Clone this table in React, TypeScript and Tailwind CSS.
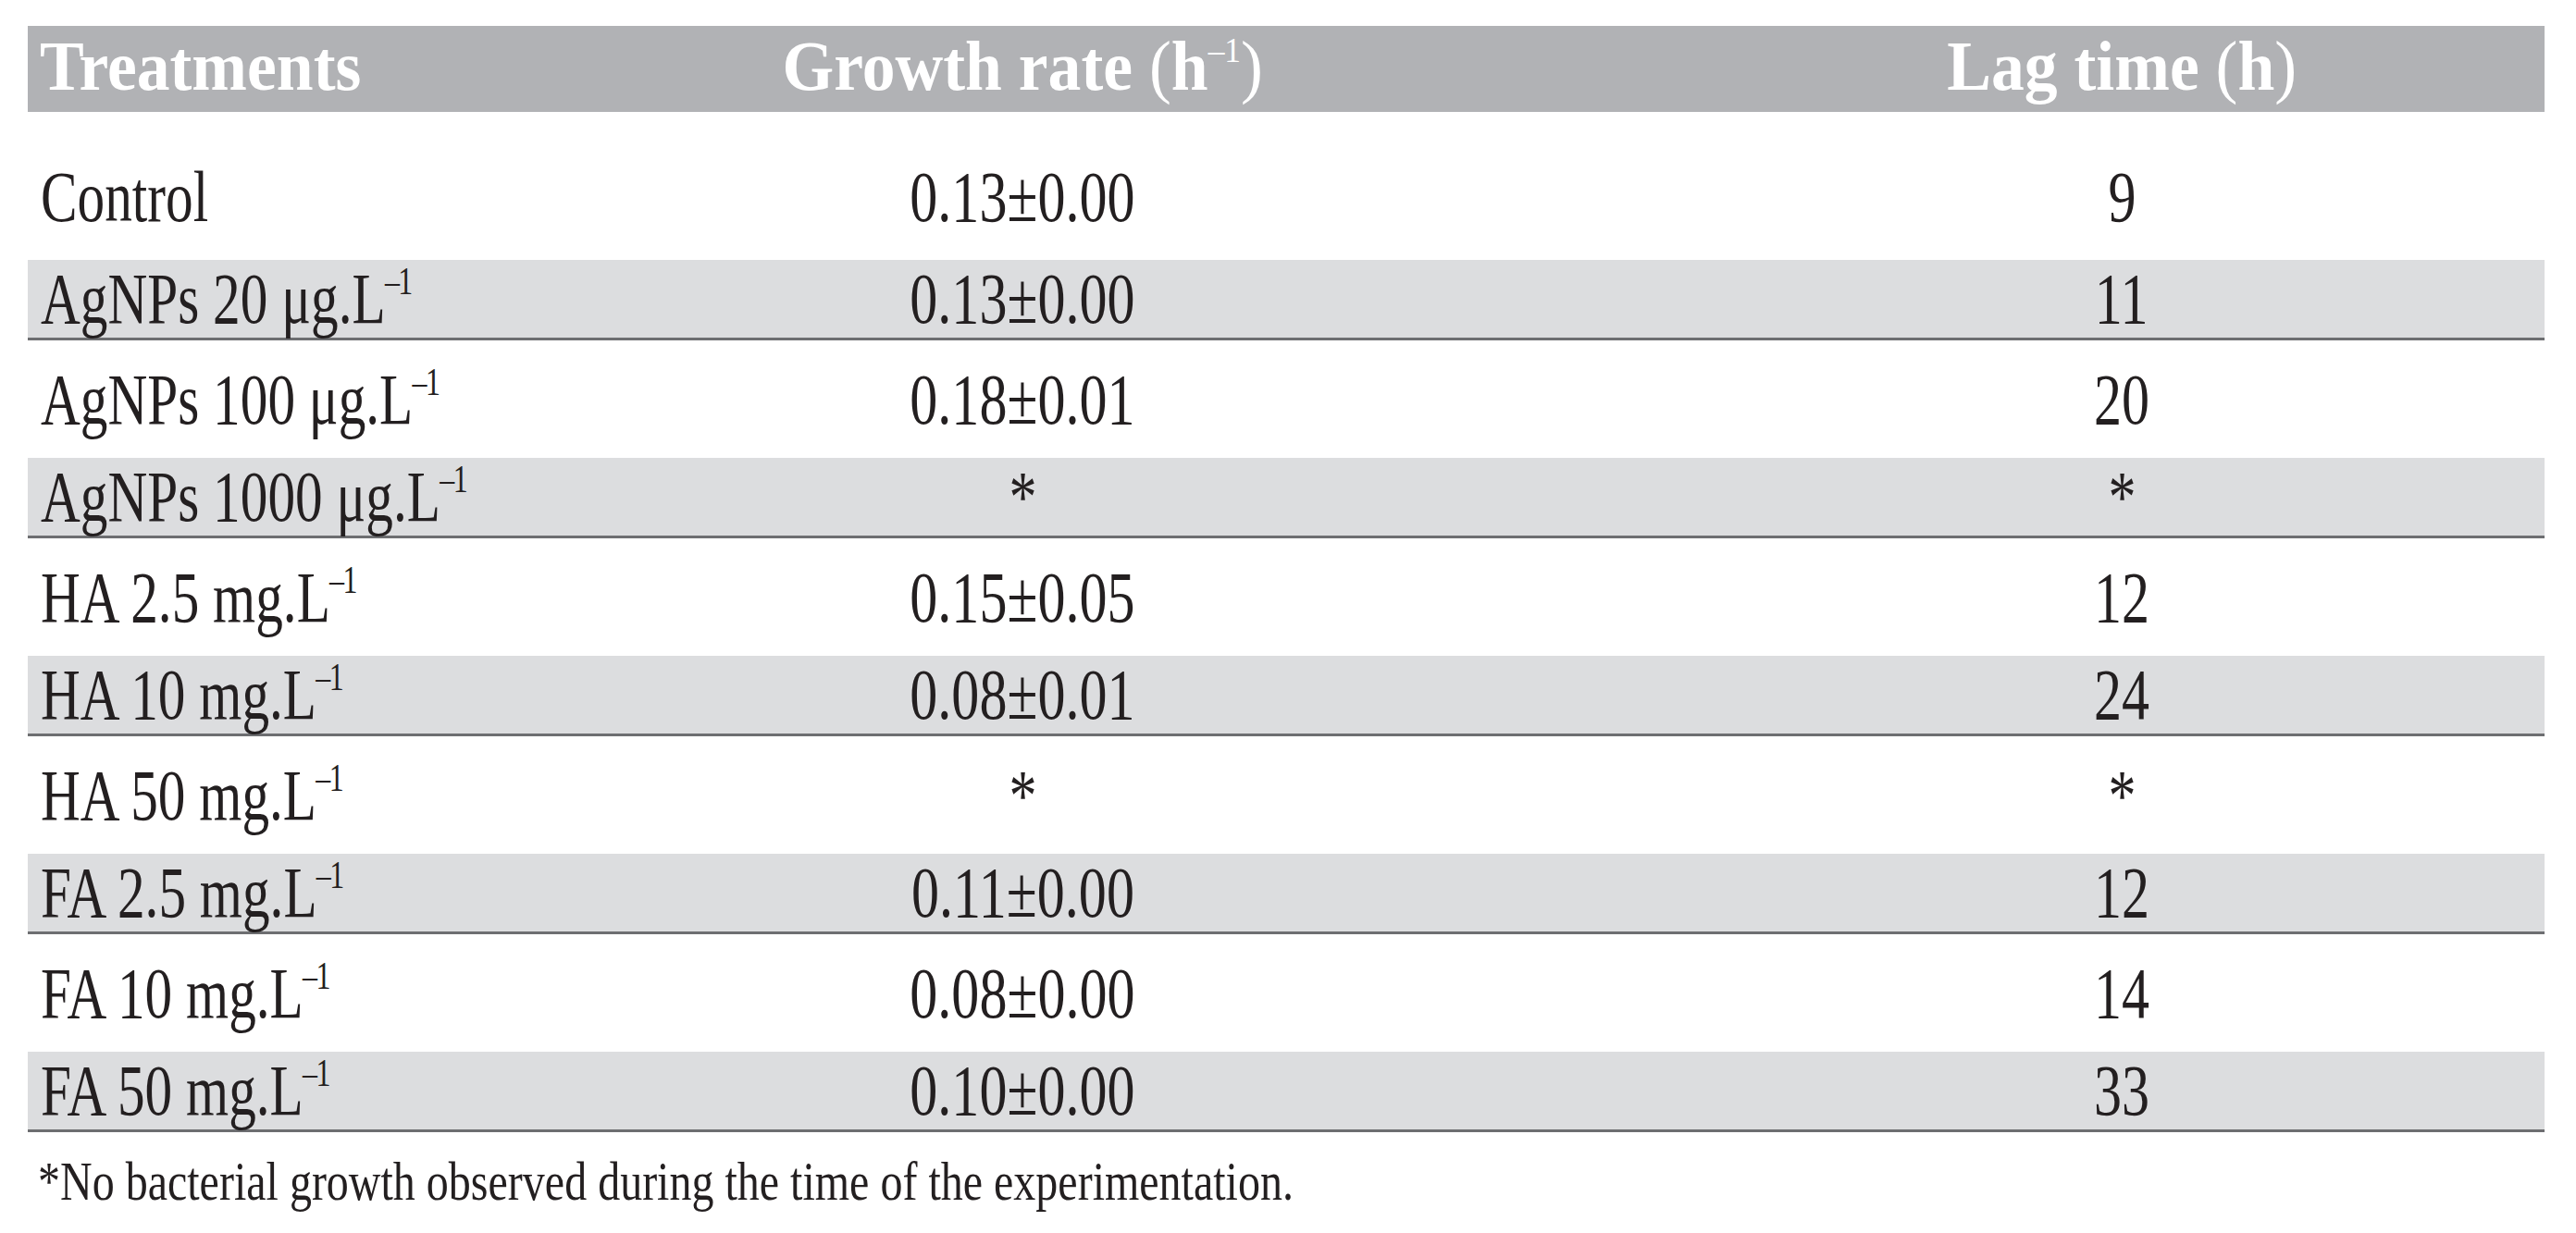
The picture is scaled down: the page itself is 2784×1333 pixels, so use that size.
import React from "react"

type Row = {
  name: string
  unit?: string
  rate: string
  lag: string
}

const rows: Row[] = [
  { name: "Control", rate: "0.13±0.00", lag: "9" },
  { name: "AgNPs 20 μg.L", unit: "–1", rate: "0.13±0.00", lag: "11" },
  { name: "AgNPs 100 μg.L", unit: "–1", rate: "0.18±0.01", lag: "20" },
  { name: "AgNPs 1000 μg.L", unit: "–1", rate: "*", lag: "*" },
  { name: "HA 2.5 mg.L", unit: "–1", rate: "0.15±0.05", lag: "12" },
  { name: "HA 10 mg.L", unit: "–1", rate: "0.08±0.01", lag: "24" },
  { name: "HA 50 mg.L", unit: "–1", rate: "*", lag: "*" },
  { name: "FA 2.5 mg.L", unit: "–1", rate: "0.11±0.00", lag: "12" },
  { name: "FA 10 mg.L", unit: "–1", rate: "0.08±0.00", lag: "14" },
  { name: "FA 50 mg.L", unit: "–1", rate: "0.10±0.00", lag: "33" },
]

function Cell({ children, left }: { children: React.ReactNode; left?: boolean }) {
  return (
    <div className={left ? "pl-[14px] whitespace-nowrap" : "flex justify-center whitespace-nowrap"}>
      <span className={left ? "inline-block scale-x-[0.76] origin-left" : "inline-block scale-x-[0.77] origin-center"}>
        {children}
      </span>
    </div>
  )
}

export default function App() {
  return (
    <div className="min-h-screen bg-white font-['Liberation_Serif',serif] text-[#231f20]">
      <div className="ml-[30px] pt-[28px] w-[2720px]">
        {/* header */}
        <div className="grid grid-cols-[344px_1462px_1fr] items-center h-[93px] pb-[6px] bg-[#b1b2b5] text-white font-bold text-[77px] leading-none">
          <div className="pl-[13px] whitespace-nowrap">
            <span className="inline-block scale-x-[0.93] origin-left">Treatments</span>
          </div>
          <div className="flex justify-center whitespace-nowrap">
            <span className="inline-block scale-x-[0.93] origin-center">
              Growth rate <span className="font-normal">(</span>h
              <span className="relative -top-[30px] text-[38px] font-normal">–1</span>
              <span className="font-normal">)</span>
            </span>
          </div>
          <div className="flex justify-center whitespace-nowrap">
            <span className="inline-block scale-x-[0.93] origin-center">
              Lag time <span className="font-normal">(</span>h<span className="font-normal">)</span>
            </span>
          </div>
        </div>

        {/* body */}
        <div className="mt-[32px] text-[78px] leading-none">
          {rows.map((r, i) => {
            const gray = i % 2 === 1
            return (
              <div
                key={r.name}
                className={
                  gray
                    ? "grid grid-cols-[344px_1462px_1fr] items-center h-[87px] bg-[#dcdddf] border-b-[3px] border-[#6d6e71]"
                    : i === 0
                      ? "grid grid-cols-[344px_1462px_1fr] items-center h-[128px] pb-[8px]"
                      : "grid grid-cols-[344px_1462px_1fr] items-center h-[127px]"
                }
              >
                <Cell left>
                  {r.name}
                  {r.unit && (
                    <span className="relative -top-[31px] -ml-[1px] text-[42px] tracking-[-2px]">{r.unit}</span>
                  )}
                </Cell>
                <Cell>{r.rate}</Cell>
                <Cell>{r.lag}</Cell>
              </div>
            )
          })}
        </div>

        {/* footnote */}
        <div className="mt-[23px] pl-[11px] text-[60px] leading-none whitespace-nowrap">
          <span className="inline-block scale-x-[0.8] origin-left">
            *No bacterial growth observed during the time of the experimentation.
          </span>
        </div>
      </div>
    </div>
  )
}
